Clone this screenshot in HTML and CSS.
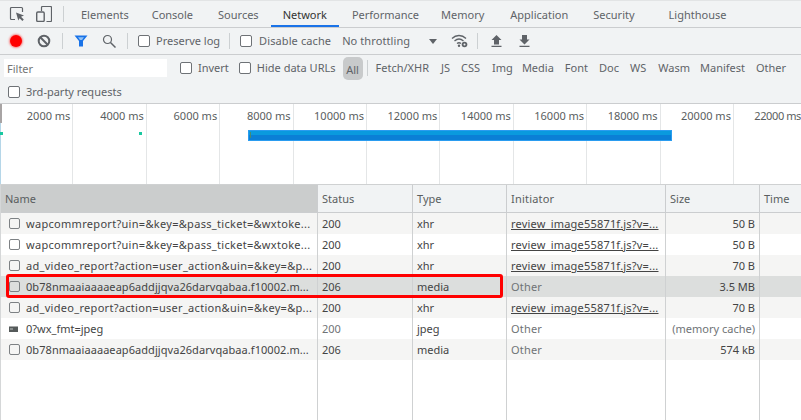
FILE: index.html
```html
<!DOCTYPE html>
<html>
<head>
<meta charset="utf-8">
<title>Network</title>
<link rel="stylesheet" href="styles.css">
</head>
<body>
<div class="tabbar">
  <svg class="ic ic-inspect" width="16" height="16" viewBox="0 0 16 16"><path d="M6 13.500H2.500a1 1 0 0 1-1-1V2.500a1 1 0 0 1 1-1h10a1 1 0 0 1 1 1V6" fill="none" stroke="#5f6368" stroke-width="1.200"/><path d="M7 6.500l8 3-3 1.300 2.800 2.800-1.400 1.400-2.800-2.800L9.300 14.500z" fill="#5f6368"/></svg>
  <svg class="ic ic-device" width="16" height="16" viewBox="0 0 16 16"><path d="M5.500 5V1.500a1 1 0 0 1 1-1h8a1 1 0 0 1 1 1v13a1 1 0 0 1-1 1h-4" fill="none" stroke="#5f6368" stroke-width="1.200"/><rect x=".7" y="6" width="7.500" height="9.500" rx="1.200" fill="none" stroke="#5f6368" stroke-width="1.400"/></svg>
  <span class="sep tabsep"></span>
  <span class="tab t1">Elements</span>
  <span class="tab t2">Console</span>
  <span class="tab t3">Sources</span>
  <span class="tab t4 on">Network</span>
  <span class="tab t5">Performance</span>
  <span class="tab t6">Memory</span>
  <span class="tab t7">Application</span>
  <span class="tab t8">Security</span>
  <span class="tab t9">Lighthouse</span>
</div>
<div class="toolbar">
  <span class="rec"></span>
  <svg class="ic ic-clear" width="14" height="14" viewBox="0 0 14 14"><circle cx="7" cy="7" r="5.300" fill="none" stroke="#5f6368" stroke-width="2"/><path d="M3.300 3.300l7.400 7.400" stroke="#5f6368" stroke-width="2"/></svg>
  <span class="sep s1"></span>
  <svg class="ic ic-filter" width="14" height="12" viewBox="0 0 14 12"><path d="M.5.500h13L9 6v5.500H5V6z" fill="#1a73e8"/><path d="M4 2.300h6L8 5H6z" fill="#8fc1f5"/></svg>
  <svg class="ic ic-search" width="14" height="14" viewBox="0 0 14 14"><circle cx="5.500" cy="5.500" r="4" fill="none" stroke="#5f6368" stroke-width="1.200"/><path d="M8.500 8.500l5 5" stroke="#5f6368" stroke-width="1.500"/></svg>
  <span class="sep s2"></span>
  <label class="chk c1"><span class="box"></span>Preserve log</label>
  <span class="sep s3"></span>
  <label class="chk c2"><span class="box"></span>Disable cache</label>
  <span class="throttle">No throttling</span>
  <span class="caret"></span>
  <svg class="ic ic-wifi" width="17" height="14" viewBox="0 0 17 14"><path d="M1 4.500C5 .5 11 .5 15 4.500M3.500 7C6.500 4.300 9.500 4.300 12.500 7M6 9.500c1.300-1 2.700-1 4 0" fill="none" stroke="#5f6368" stroke-width="1.300"/><circle cx="8" cy="11.800" r="1.200" fill="#5f6368"/><circle cx="13.500" cy="10.500" r="2.800" fill="#5f6368"/><circle cx="13.500" cy="10.500" r="1" fill="#f1f3f4"/></svg>
  <span class="sep s4"></span>
  <svg class="ic ic-up" width="11" height="12" viewBox="0 0 11 12"><path d="M5.500 0l5 5H8v4.500H3V5H.5zM.5 10.700h10V12H.5z" fill="#5f6368"/></svg>
  <svg class="ic ic-down" width="11" height="12" viewBox="0 0 11 12"><path d="M3 0h5v4.500h2.500l-5 5-5-5H3zM.5 10.700h10V12H.5z" fill="#5f6368"/></svg>
</div>
<div class="filters">
  <div class="frow">
    <span class="finput">Filter</span>
    <label class="chk c3"><span class="box"></span>Invert</label>
    <label class="chk c4"><span class="box"></span>Hide data URLs</label>
    <span class="all">All</span>
    <span class="sep s5"></span>
    <span class="ft f1">Fetch/XHR</span>
    <span class="ft f2">JS</span>
    <span class="ft f3">CSS</span>
    <span class="ft f4">Img</span>
    <span class="ft f5">Media</span>
    <span class="ft f6">Font</span>
    <span class="ft f7">Doc</span>
    <span class="ft f8">WS</span>
    <span class="ft f9">Wasm</span>
    <span class="ft f10">Manifest</span>
    <span class="ft f11">Other</span>
  </div>
  <label class="chk c5"><span class="box"></span>3rd-party requests</label>
</div>
<div class="overview">
  <div class="tick">2000 ms</div>
  <div class="tick">4000 ms</div>
  <div class="tick">6000 ms</div>
  <div class="tick">8000 ms</div>
  <div class="tick">10000 ms</div>
  <div class="tick">12000 ms</div>
  <div class="tick">14000 ms</div>
  <div class="tick">16000 ms</div>
  <div class="tick">18000 ms</div>
  <div class="tick">20000 ms</div>
  <div class="tick last">22000 ms</div>
  <span class="grip"></span>
  <span class="gripb"></span>
  <span class="dot d1"></span>
  <span class="dot d2"></span>
  <span class="bar"></span>
</div>
<div class="table">
  <div class="row head">
    <div class="cell name sorted">Name</div><div class="cell status">Status</div><div class="cell type">Type</div><div class="cell init">Initiator</div><div class="cell size">Size</div><div class="cell time">Time</div>
  </div>
  <div class="row odd">
    <div class="cell name"><span class="box"></span><span class="txt wide">wapcommreport?uin=&amp;key=&amp;pass_ticket=&amp;wxtoke...</span></div><div class="cell status">200</div><div class="cell type">xhr</div><div class="cell init"><u>review_image55871f.js?v=...</u></div><div class="cell size">50 B</div><div class="cell time"></div>
  </div>
  <div class="row">
    <div class="cell name"><span class="box"></span><span class="txt wide">wapcommreport?uin=&amp;key=&amp;pass_ticket=&amp;wxtoke...</span></div><div class="cell status">200</div><div class="cell type">xhr</div><div class="cell init"><u>review_image55871f.js?v=...</u></div><div class="cell size">50 B</div><div class="cell time"></div>
  </div>
  <div class="row odd">
    <div class="cell name"><span class="box"></span><span class="txt wide">ad_video_report?action=user_action&amp;uin=&amp;key=&amp;p...</span></div><div class="cell status">200</div><div class="cell type">xhr</div><div class="cell init"><u>review_image55871f.js?v=...</u></div><div class="cell size">70 B</div><div class="cell time"></div>
  </div>
  <div class="row sel">
    <div class="cell name"><span class="box"></span><span class="txt hash">0b78nmaaiaaaaeap6addjjqva26darvqabaa.f10002.m...</span></div><div class="cell status">206</div><div class="cell type">media</div><div class="cell init dim">Other</div><div class="cell size">3.5 MB</div><div class="cell time"></div>
  </div>
  <div class="row odd">
    <div class="cell name"><span class="box"></span><span class="txt wide">ad_video_report?action=user_action&amp;uin=&amp;key=&amp;p...</span></div><div class="cell status">200</div><div class="cell type">xhr</div><div class="cell init"><u>review_image55871f.js?v=...</u></div><div class="cell size">70 B</div><div class="cell time"></div>
  </div>
  <div class="row">
    <div class="cell name"><svg class="thumb" width="9" height="6" viewBox="0 0 9 6"><rect width="9" height="6" fill="#555a5a"/><rect width="9" height="1" fill="#a8aaaa"/><rect x="1" y="2" width="3" height="2" fill="#8a8f8f"/></svg><span class="txt">0?wx_fmt=jpeg</span></div><div class="cell status dim">200</div><div class="cell type">jpeg</div><div class="cell init dim">Other</div><div class="cell size dim">(memory cache)</div><div class="cell time"></div>
  </div>
  <div class="row odd">
    <div class="cell name"><span class="box"></span><span class="txt hash">0b78nmaaiaaaaeap6addjjqva26darvqabaa.f10002.m...</span></div><div class="cell status">206</div><div class="cell type">media</div><div class="cell init dim">Other</div><div class="cell size">574 kB</div><div class="cell time"></div>
  </div>
  <div class="row fill">
    <div class="cell name"></div><div class="cell status"></div><div class="cell type"></div><div class="cell init"></div><div class="cell size"></div><div class="cell time"></div>
  </div>
  <span class="redbox"></span>
</div>
</body>
</html>
```
FILE: styles.css
```css
* { box-sizing: border-box; }
html, body { margin: 0; padding: 0; }
body {
  width: 801px; height: 420px; overflow: hidden; background: #fff;
  font-family: "Noto Sans", "Open Sans", sans-serif; font-size: 11px; color: #5f6368;
  display: flex; flex-direction: column;
}
.ic { flex: none; display: block; }
.sep { flex: none; width: 1px; height: 16px; background: #ccd0d2; display: block; }
.box { flex: none; display: block; width: 12px; height: 12px; border: 1px solid #6e7276; border-radius: 2px; background: #fff; }

.tabbar {
  height: 28px; flex: none; background: #f1f3f4; border-top: 1px solid #e2e4e5; border-bottom: 1px solid #cbcdcf;
  display: flex; align-items: center; position: relative;
}
.ic-inspect { margin-left: 9px; }
.ic-device { margin-left: 11px; }
.tabsep { margin-left: 11px; }
.tab { height: 26px; line-height: 28px; flex: none; white-space: nowrap; }
.t1 { margin-left: 17px; }
.t2 { margin-left: 23px; }
.t3 { margin-left: 25px; }
.t4 { margin-left: 24px; color: #333; }
.t5 { margin-left: 25px; }
.t6 { margin-left: 22px; }
.t7 { margin-left: 26px; }
.t8 { margin-left: 25px; }
.t9 { margin-left: 34px; }
.on { position: relative; }
.on::after { content: ""; position: absolute; left: -12px; right: -12px; bottom: 0; height: 2px; background: #1a73e8; }

.toolbar {
  height: 27px; flex: none; background: #f1f3f4; border-bottom: 1px solid #cbcdcf;
  display: flex; align-items: center; line-height: 28px;
}
.rec { flex: none; width: 12px; height: 12px; margin-left: 10px; border-radius: 50%; background: #f00; box-shadow: 0 0 2px 1px rgba(255,60,60,.6); }
.ic-clear { margin-left: 15px; }
.s1 { margin-left: 11px; }
.ic-filter { margin-left: 11px; }
.ic-search { margin-left: 14px; }
.s2 { margin-left: 11px; }
.chk { display: flex; align-items: center; flex: none; white-space: nowrap; gap: 6px; }
.c1 { margin-left: 10px; }
.s3 { margin-left: 9px; }
.c2 { margin-left: 10px; gap: 7px; letter-spacing: .1px; }
.throttle { margin-left: 11px; flex: none; letter-spacing: .1px; }
.caret { flex: none; margin-left: 19px; width: 0; height: 0; border-left: 4px solid transparent; border-right: 4px solid transparent; border-top: 5px solid #5f6368; }
.ic-wifi { margin-left: 14px; }
.s4 { margin-left: 9px; }
.ic-up { margin-left: 13px; }
.ic-down { margin-left: 17px; }

.filters { height: 49px; flex: none; background: #f1f3f4; border-bottom: 1px solid #cbcdcf; padding-top: 3px; }
.frow { height: 20px; display: flex; align-items: center; line-height: 24px; }
.finput { flex: none; width: 163px; height: 18px; margin-left: 4px; padding-left: 3px; line-height: 20px; background: #fff; color: #757575; }
.c3 { margin-left: 13px; }
.c4 { margin-left: 10px; }
.all { flex: none; margin-left: 7px; width: 20px; height: 23px; line-height: 25px; text-align: center; background: #c8cacb; border-radius: 5px; }
.s5 { margin-left: 4px; }
.ft { flex: none; white-space: nowrap; }
.f1 { margin-left: 8px; }
.f2 { margin-left: 12px; }
.f3 { margin-left: 11px; }
.f4 { margin-left: 12px; }
.f5 { margin-left: 9px; }
.f6 { margin-left: 11px; }
.f7 { margin-left: 11px; }
.f8 { margin-left: 11px; }
.f9 { margin-left: 12px; }
.f10 { margin-left: 10px; }
.f11 { margin-left: 11px; }
.c5 { margin: 6px 0 0 8px; }

.overview { height: 80px; flex: none; background: #fff; display: flex; position: relative; }
.tick { flex: none; width: 73.400px; height: 100%; border-right: 1px solid #e4e6e7; text-align: right; padding: 4px 2px 0 0; color: #5a5e60; white-space: nowrap; }
.tick.last { flex: 1; width: auto; min-width: 0; border-right: 0; padding-right: 0; letter-spacing: -.4px; }
.grip { position: absolute; left: 0; top: 0; width: 2px; height: 19px; background: #a8a4a4; }
.gripb { position: absolute; left: 0; top: 19px; width: 1px; height: 61px; background: #b5d6e8; }
.dot { position: absolute; width: 3px; height: 3px; background: #19c8a0; }
.d1 { left: 0; top: 28px; }
.d2 { left: 139px; top: 28px; }
.bar { position: absolute; left: 248px; top: 26px; width: 424px; height: 11px; background: linear-gradient(#4a8a70, #4a8a70) 1px 1px / 1px 6px no-repeat, linear-gradient(#0a9ade 50%, #0b7fd6 50%); border: 1px solid #2a9cf0; }

.table { flex: 1; position: relative; border-left: 1px solid #d5d7d8; min-height: 0; display: flex; flex-direction: column; border-top: 1px solid #cfd1d2; }
.row { display: flex; height: 21px; flex: none; color: #444; background: #fff; line-height: 23px; }
.odd { background: #f5f5f4; }
.sel { background: #dcdedd; }
.head { height: 28px; background: #f1f3f4; border-bottom: 1px solid #cbcdcf; color: #5a5e60; }
.fill { flex: 1; height: auto; }
.cell { flex: none; height: 100%; padding-left: 4px; display: flex; align-items: center; border-right: 1px solid #cfd1d2; white-space: nowrap; overflow: hidden; }
.head .cell { border-right-color: #cbcdcf; }
.name { width: 317px; gap: 6px; padding-left: 8px; }
.head .name { padding-left: 4px; }
.status { width: 95px; }
.type { width: 94px; }
.init { width: 159px; letter-spacing: .2px; }
.size { width: 94px; justify-content: flex-end; padding: 0 4px 0 0; }
.head .size { justify-content: flex-start; padding-left: 4px; }
.time { width: 41px; border-right: 0; }
.sorted { background: #cbcdcd; }
.dim { color: #6f7376; }
.wide { letter-spacing: .3px; }
.hash { letter-spacing: .06px; }
.row .box { width: 11px; height: 11px; border-color: #7d8184; background: transparent; }
.thumb { flex: none; display: block; margin-right: 2px; }
.redbox { position: absolute; left: 5px; top: 89px; width: 497px; height: 24px; border: 3px solid #f00; border-radius: 3px; }
```
